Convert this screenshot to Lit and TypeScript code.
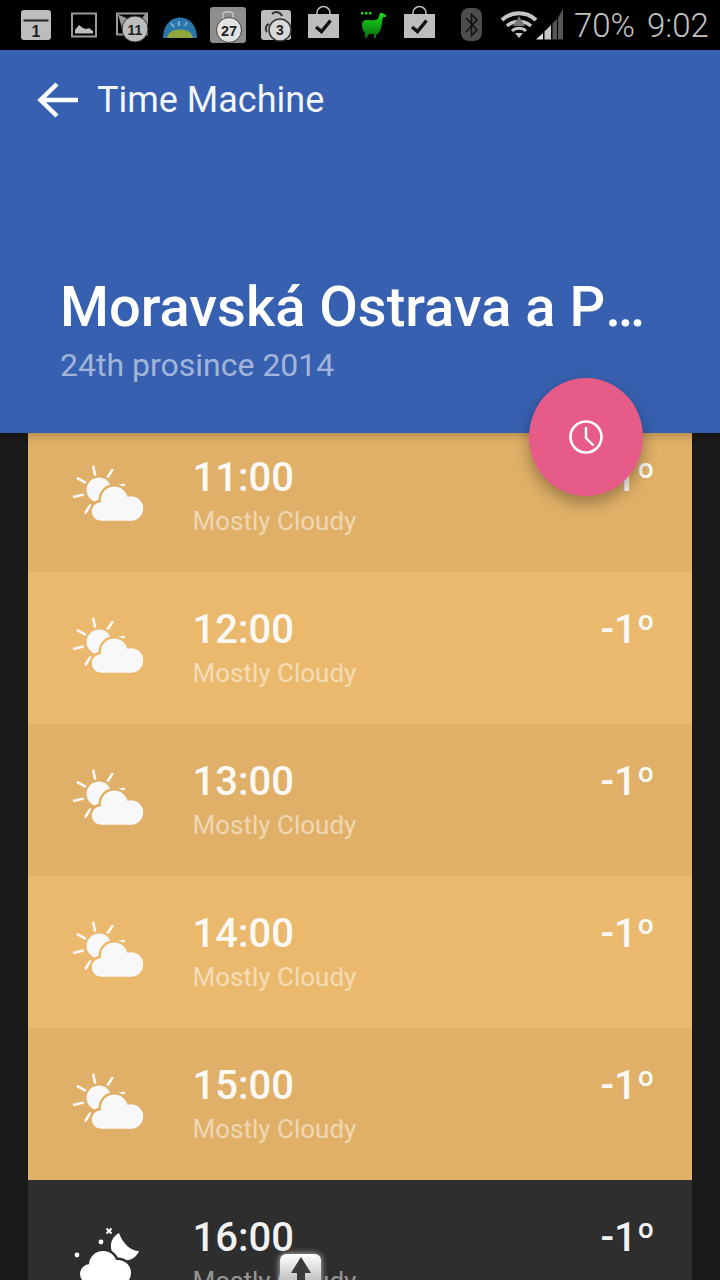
import { LitElement, html, css, svg } from "lit";
import { customElement } from "lit/decorators.js";

const hours = [
  { time: "11:00", temp: "-1º", alt: true, night: false },
  { time: "12:00", temp: "-1º", alt: false, night: false },
  { time: "13:00", temp: "-1º", alt: true, night: false },
  { time: "14:00", temp: "-1º", alt: false, night: false },
  { time: "15:00", temp: "-1º", alt: true, night: false },
  { time: "16:00", temp: "-1º", alt: false, night: true },
];

// white cloud lobes, drawn twice: once as an outline in the row colour, once filled
const dayCloud = svg`
  <circle cx="41.3" cy="36" r="13.4"/>
  <circle cx="58" cy="44.5" r="12.2"/>
  <circle cx="28" cy="47.5" r="9.2"/>
  <rect x="28" y="44" width="30" height="12.7"/>`;

const dayIcon = svg`
  <svg class="icon" viewBox="0 0 72 60" width="72" height="60">
    <g stroke="#f8f8f8" stroke-width="2.6" stroke-linecap="round">
      <path d="M20.3 2.7 22 10.7M39.3 6 35 12.7M4.7 14.3 12 18.3M1.3 32.7 9.7 30.7M12.7 48.3 17.3 41.3M44.7 22 50.7 21"/>
    </g>
    <circle cx="26" cy="26" r="12.4" fill="#f8f8f8"/>
    <g class="cut">${dayCloud}</g>
    <g fill="#f8f8f8">${dayCloud}</g>
  </svg>`;

const nightCloud = svg`
  <circle cx="30" cy="41" r="14"/>
  <circle cx="45" cy="49" r="13"/>
  <circle cx="17" cy="50" r="10"/>
  <rect x="17" y="49" width="28" height="16"/>`;

const nightIcon = svg`
  <svg class="icon" viewBox="0 0 72 72" width="72" height="72">
    <g fill="#fff">
      <path d="M46 9A14.5 14.5 0 1 0 66 27C58 27 50 20 46 9Z"/>
      <circle cx="28" cy="18" r="2.4"/>
      <circle cx="4" cy="31" r="2.4"/>
    </g>
    <path d="M33.5 4.5 38.5 9.5M38.5 4.5 33.5 9.5" stroke="#fff" stroke-width="2"/>
    <g class="cut">${nightCloud}</g>
    <g fill="#fff">${nightCloud}</g>
  </svg>`;

@customElement("hour-row")
class HourRow extends LitElement {
  static properties = {
    time: {},
    temp: {},
    alt: { type: Boolean, reflect: true },
    night: { type: Boolean, reflect: true },
  };
  time = "";
  temp = "";
  alt = false;
  night = false;

  static styles = css`
    :host {
      display: flex;
      height: 152px;
      background: var(--row);
      --row: #ebb96e;
      padding: 36px 37px 0 45px;
      box-sizing: border-box;
      color: #fff;
      font-family: Roboto, sans-serif;
    }
    :host([alt]) {
      --row: #e0b068;
    }
    :host([night]) {
      --row: #2e2e2e;
    }
    .icon-box {
      width: 119.5px;
      flex: none;
      padding-top: 8px;
    }
    .icon {
      display: block;
    }
    .cut {
      fill: var(--row);
      stroke: var(--row);
      stroke-width: 5px;
    }
    .text {
      flex: 1;
    }
    .time,
    .temp {
      font-size: 40px;
      font-weight: 500;
      line-height: 44px;
      color: rgba(255, 255, 255, 0.95);
    }
    .cond {
      font-size: 26px;
      line-height: 30px;
      margin-top: 6px;
      color: rgba(255, 255, 255, 0.5);
    }
  `;

  render() {
    return html`
      <div class="icon-box">${this.night ? nightIcon : dayIcon}</div>
      <div class="text">
        <div class="time">${this.time}</div>
        <div class="cond">Mostly Cloudy</div>
      </div>
      <div class="temp">${this.temp}</div>
    `;
  }
}

const statusIcons = svg`
  <svg class="notif" viewBox="0 0 570 50" width="570" height="50">
    <defs>
      <linearGradient id="llama" x1="0" y1="0" x2="0" y2="1">
        <stop offset="0" stop-color="#17e017"/>
        <stop offset="1" stop-color="#056b10"/>
      </linearGradient>
    </defs>
    <g fill="#bdbdbd">
      <!-- calendar -->
      <rect x="21" y="10" width="30" height="30" rx="3"/>
      <rect x="23.5" y="19.5" width="25" height="2" fill="#222"/>
      <text x="36" y="37" class="badge" font-size="16" text-anchor="middle">1</text>

      <!-- picture -->
      <path fill-rule="evenodd" d="M71 12.5h26v25H71ZM73 14.5v21h22v-21Z" fill="#9a9a9a"/>
      <path d="M75 33.5V30l4-5 4 3 3 1 3-1 4 3v2.500Z"/>

      <!-- mail with badge -->
      <path fill-rule="evenodd" d="M116 12.5h32v23H116ZM118 14.5v19h28v-19Z" fill="#9a9a9a"/>
      <path d="M118 14.5 131 20 122 28ZM146 13 140 21 147 27Z" fill="#9a9a9a"/>
      <circle cx="135" cy="29" r="13" fill="#bdbdbd" stroke="#333" stroke-width="1"/>
      <text x="135" y="34.5" class="badge" font-size="14" text-anchor="middle">11</text>

      <!-- tile 27 -->
      <rect x="210" y="7" width="36" height="36" rx="3" fill="#8e8e8e"/>
      <rect x="223" y="12" width="10" height="8" rx="3" fill="none" stroke="#c8c8c8" stroke-width="1.5"/>
      <circle cx="229" cy="30" r="12.5" fill="#e2e2e2" stroke="#444" stroke-width="1"/>
      <text x="229" y="35.5" class="badge" font-size="14.5" text-anchor="middle">27</text>

      <!-- tile 3 -->
      <rect x="261" y="10" width="30" height="30" rx="3"/>
      <path d="M272 14a6 6 0 0 1 10 2M269 24a5 5 0 0 0-2 8" fill="none" stroke="#333" stroke-width="2"/>
      <circle cx="280" cy="30" r="11" fill="#d8d8d8" stroke="#333" stroke-width="1.5"/>
      <text x="280" y="35" class="badge" font-size="14" text-anchor="middle">3</text>

      <!-- shopping bags -->
      <path d="M308 14h31v24h-31Z"/>
      <path d="M317 14v-1a6.5 6.5 0 0 1 13 0v1" fill="none" stroke="#bdbdbd" stroke-width="1.5"/>
      <path d="M316 27l5.500 4.500 9-11" fill="none" stroke="#111" stroke-width="3.5"/>
      <path d="M404 14h31v24h-31Z"/>
      <path d="M413 14v-1a6.5 6.5 0 0 1 13 0v1" fill="none" stroke="#bdbdbd" stroke-width="1.5"/>
      <path d="M412 27l5.500 4.500 9-11" fill="none" stroke="#111" stroke-width="3.5"/>
    </g>

    <!-- globe -->
    <path d="M163 38C163 26 170 17.500 180 17.500C190 17.500 197 26 197 38Z" fill="#2a76ab"/>
    <path d="M171 23l3 4M187 22l-2 4M179 21v5" stroke="#8fb9d4" stroke-width="1.5"/>
    <path d="M167 38C168 33 172 29.500 180 29.500C188 29.500 192 33 193 38Z" fill="#8fa63a"/>

    <!-- green llama -->
    <path d="M361 12h2.500v2.500H361ZM365 12h2.500v2.500H365ZM369 12h2.500v2.500H369Z" fill="#17d017"/>
    <path d="M380 13h2l4 2v2h-3c-1 4-1 8-2 11c-1 4-3 6-5 7v3h-2v-4h-5l-2 4h-2v-5c-2-2-3-5-3-8c0-3 2-5 5-5c5 0 8 1 11-1Z" fill="url(#llama)"/>

    <!-- bluetooth tile -->
    <rect x="461" y="8" width="21" height="33" rx="8" fill="#4d4d4d"/>
    <path d="M466 18l11 12-5.500 5.500v-21L477 20l-11 12" fill="none" stroke="#111" stroke-width="1.6"/>

    <!-- wifi -->
    <g fill="none" stroke="#c6c6c6">
      <path d="M502 20a25 25 0 0 1 34 0" stroke-width="4"/>
      <path d="M507 26a18 18 0 0 1 24 0" stroke-width="3.5"/>
      <path d="M512 31a10 10 0 0 1 14 0" stroke-width="3"/>
    </g>
    <path d="M519 38l-4-5h8Z" fill="#c6c6c6"/>
    <path d="M519 16l-6 10h12Z" fill="#777"/>

    <!-- signal bars -->
    <path d="M536 39.5 543 33v6.500Z" fill="#dedede"/>
    <path d="M544.5 31.500 551 25v14.500h-6.500Z" fill="#c8c8c8"/>
    <path d="M552.5 23.500 557 19v20.500h-4.500Z" fill="#555"/>
    <path d="M558 18l5-9.500v31h-5Z" fill="#555"/>
  </svg>`;

@customElement("app-root")
class AppRoot extends LitElement {
  static styles = css`
    :host {
      display: block;
      position: relative;
      width: 720px;
      height: 1280px;
      overflow: hidden;
      background: #1a1a1a;
      font-family: Roboto, sans-serif;
    }
    .status {
      display: flex;
      align-items: center;
      height: 50px;
      background: #000;
      color: #c4c4c4;
      font-size: 33px;
      font-weight: 300;
    }
    .notif {
      display: block;
      flex: none;
    }
    .badge {
      fill: #222;
      font-family: "Liberation Sans", sans-serif;
      font-weight: 700;
    }
    .status-text {
      display: flex;
      gap: 12px;
      margin-left: 4px;
      white-space: nowrap;
    }
    header {
      position: relative;
      z-index: 1;
      height: 383px;
      box-sizing: border-box;
      background: #3760b0;
      color: #fff;
      box-shadow: 0 2px 10px rgba(0, 0, 0, 0.25);
    }
    .toolbar {
      display: flex;
      align-items: center;
      height: 100px;
      padding-left: 37px;
      gap: 18px;
      font-size: 36px;
      color: rgba(255, 255, 255, 0.95);
    }
    .title {
      margin: 126px 0 0 60px;
      width: 590px;
      font-size: 56px;
      line-height: 62px;
      font-weight: 500;
      white-space: nowrap;
      overflow: hidden;
      text-overflow: ellipsis;
    }
    .date {
      margin: 8px 0 0 60px;
      font-size: 32px;
      line-height: 38px;
      color: rgba(255, 255, 255, 0.55);
    }
    .list {
      margin: -13px 28px 0;
    }
    .fab {
      position: absolute;
      z-index: 2;
      left: 529px;
      top: 378px;
      width: 114px;
      height: 118px;
      border-radius: 50%;
      background: #e75b88;
      box-shadow: 0 7px 16px rgba(0, 0, 0, 0.32);
      display: flex;
      align-items: center;
      justify-content: center;
    }
    .key {
      position: absolute;
      z-index: 2;
      left: 280px;
      top: 1254px;
      width: 41px;
      height: 44px;
      border-radius: 6px;
      background: linear-gradient(#fff, #9a9a9a);
      box-shadow: 0 0 6px rgba(255, 255, 255, 0.75);
      display: flex;
      justify-content: center;
      padding-top: 3px;
      box-sizing: border-box;
    }
  `;

  render() {
    return html`
      <div class="status">
        ${statusIcons}
        <div class="status-text"><span>70%</span><span>9:02</span></div>
      </div>
      <header>
        <div class="toolbar">
          <svg width="42" height="36" viewBox="0 0 42 36">
            <path d="M41 18H4M20 2 3.5 18 20 34" fill="none" stroke="#fff" stroke-width="4.5"/>
          </svg>
          <span>Time Machine</span>
        </div>
        <div class="title">Moravská Ostrava a Přívoz</div>
        <div class="date">24th prosince 2014</div>
      </header>
      <div class="list">
        ${hours.map(
          (h) => html`<hour-row
            .time=${h.time}
            .temp=${h.temp}
            ?alt=${h.alt}
            ?night=${h.night}
          ></hour-row>`
        )}
      </div>
      <div class="fab">
        <svg width="36" height="36" viewBox="0 0 36 36" fill="none" stroke="#fff">
          <circle cx="18" cy="18" r="15.5" stroke-width="2.6"/>
          <path d="M18 8v11l7.5 7.500" stroke-width="2.4"/>
        </svg>
      </div>
      <div class="key">
        <svg width="20" height="26" viewBox="0 0 20 26">
          <path d="M10 0 20 16h-6v10H6V16H0Z" fill="#3a3a3a"/>
        </svg>
      </div>
    `;
  }
}
